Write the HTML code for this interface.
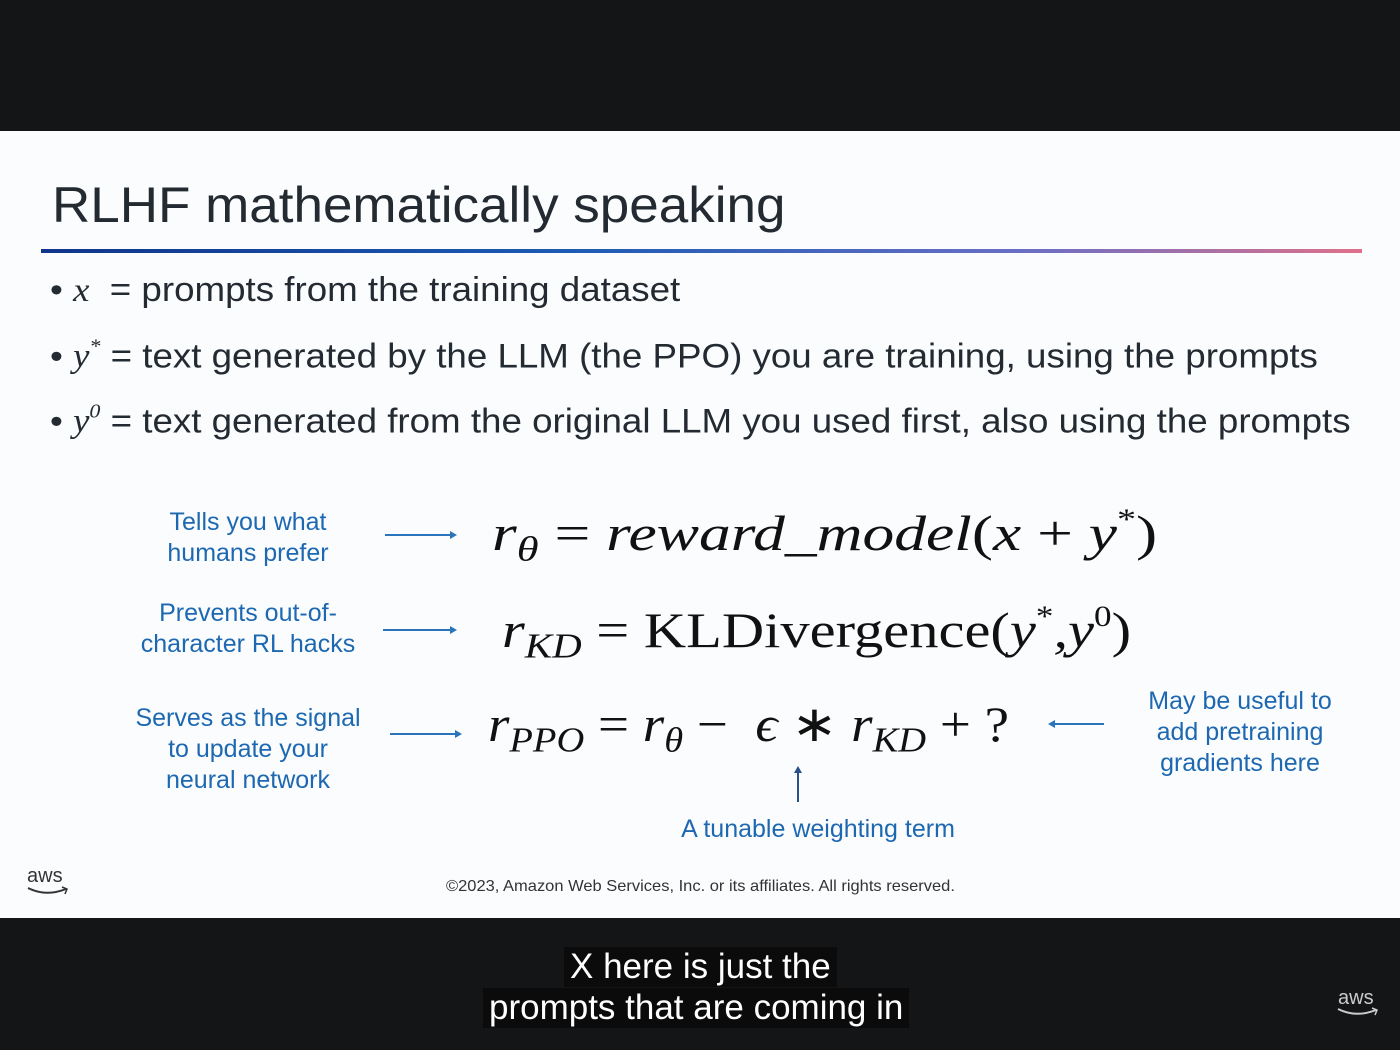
<!DOCTYPE html>
<html><head><meta charset="utf-8"><style>
html,body{margin:0;padding:0}
body{width:1400px;height:1050px;position:relative;overflow:hidden;background:#141517;font-family:"Liberation Sans",sans-serif}
.slide{position:absolute;left:0;top:131px;width:1400px;height:787px;background:#fafcfe}
.a{position:absolute;white-space:nowrap;transform-origin:0 0}
.t{color:#232a31}
.b{color:#1d68b0;font-size:25px;text-align:center;line-height:31px}
.m{font-family:"Liberation Serif",serif;font-style:italic;color:#111;font-size:50px}
.arr{position:absolute;height:2px;background:#2a74bb}
.arr.r::after{content:"";position:absolute;right:-2px;top:-3px;border-left:7px solid #2a74bb;border-top:4px solid transparent;border-bottom:4px solid transparent}
.arr.l::before{content:"";position:absolute;left:-2px;top:-3px;border-right:7px solid #2a74bb;border-top:4px solid transparent;border-bottom:4px solid transparent}
sub{font-size:0.7em;vertical-align:-0.3em}
sup{font-size:0.6em;vertical-align:0.7em}
.cap{position:absolute;background:#0b0b0b;color:#fff;font-size:35px;line-height:40px;padding:0 6px}
</style></head><body>
<div class="slide"></div>
<div class="a t" style="left:52px;top:176px;font-size:50px;transform:scaleX(1.06)">RLHF mathematically speaking</div>
<div style="position:absolute;left:41px;top:249px;width:1321px;height:4px;background:linear-gradient(90deg,#10358c 0%,#1c5bb5 40%,#6b6fc4 75%,#e0708a 100%)"></div>
<div class="a t" style="left:50px;top:271px;font-size:34px;transform:scaleX(1.08)">• <i style="font-family:'Liberation Serif',serif">x</i> &nbsp;= prompts from the training dataset</div>
<div class="a t" style="left:50px;top:336px;font-size:34px;transform:scaleX(1.08)">• <i style="font-family:'Liberation Serif',serif">y<sup>*</sup></i> = text generated by the LLM (the PPO) you are training, using the prompts</div>
<div class="a t" style="left:50px;top:401px;font-size:34px;transform:scaleX(1.08)">• <i style="font-family:'Liberation Serif',serif">y<sup>0</sup></i> = text generated from the original LLM you used first, also using the prompts</div>

<div class="a b" style="left:148px;top:507px;width:200px">Tells you what<br>humans prefer</div>
<div class="a b" style="left:128px;top:598px;width:240px">Prevents out-of-<br>character RL hacks</div>
<div class="a b" style="left:118px;top:703px;width:260px;line-height:31px">Serves as the signal<br>to update your<br>neural network</div>
<div class="a b" style="left:1130px;top:686px;width:220px">May be useful to<br>add pretraining<br>gradients here</div>
<div class="a b" style="left:658px;top:814px;width:320px">A tunable weighting term</div>

<div class="arr r" style="left:385px;top:534px;width:70px"></div>
<div class="arr r" style="left:383px;top:629px;width:72px"></div>
<div class="arr r" style="left:390px;top:733px;width:70px"></div>
<div class="arr l" style="left:1050px;top:723px;width:54px"></div>
<div style="position:absolute;left:797px;top:768px;width:2px;height:34px;background:#2a4f8a"></div>
<div style="position:absolute;left:794px;top:766px;border-bottom:7px solid #2a4f8a;border-left:4px solid transparent;border-right:4px solid transparent"></div>

<div class="a m" style="left:492px;top:503px;transform:scaleX(1.27)">r<sub>θ</sub> <span style="font-style:normal">=</span> reward_model<span style="font-style:normal">(</span>x <span style="font-style:normal">+</span> y<sup style="font-style:normal">*</sup><span style="font-style:normal">)</span></div>
<div class="a m" style="left:502px;top:600px;transform:scaleX(1.17)">r<sub>KD</sub> <span style="font-style:normal">= KLDivergence(</span>y<sup style="font-style:normal">*</sup>,y<sup style="font-style:normal">0</sup><span style="font-style:normal">)</span></div>
<div class="a m" style="left:488px;top:695px;transform:scaleX(1.1)">r<sub>PPO</sub> <span style="font-style:normal">=</span> r<sub>θ</sub> <span style="font-style:normal">−</span> &nbsp;ϵ <span style="font-style:normal">∗</span> r<sub>KD</sub> <span style="font-style:normal">+ ?</span></div>

<div class="a" style="left:27px;top:866px;font-size:20px;color:#333;line-height:20px">aws</div>
<svg style="position:absolute;left:26px;top:885px" width="46" height="14"><path d="M2 3 Q20 12 40 4" stroke="#333" stroke-width="2" fill="none"/><path d="M36 2 L41 4 L39 9" stroke="#333" stroke-width="1.5" fill="none"/></svg>
<div class="a" style="left:446px;top:878px;font-size:16px;color:#333;transform:scaleX(1.03)">©2023, Amazon Web Services, Inc. or its affiliates. All rights reserved.</div>

<div class="cap" style="left:564px;top:947px">X here is just the</div>
<div class="cap" style="left:483px;top:988px">prompts that are coming in</div>

<div class="a" style="left:1338px;top:988px;font-size:20px;color:#ccc;line-height:20px">aws</div>
<svg style="position:absolute;left:1336px;top:1006px" width="46" height="14"><path d="M2 3 Q20 12 40 4" stroke="#ccc" stroke-width="2" fill="none"/><path d="M36 2 L41 4 L39 9" stroke="#ccc" stroke-width="1.5" fill="none"/></svg>
</body></html>
